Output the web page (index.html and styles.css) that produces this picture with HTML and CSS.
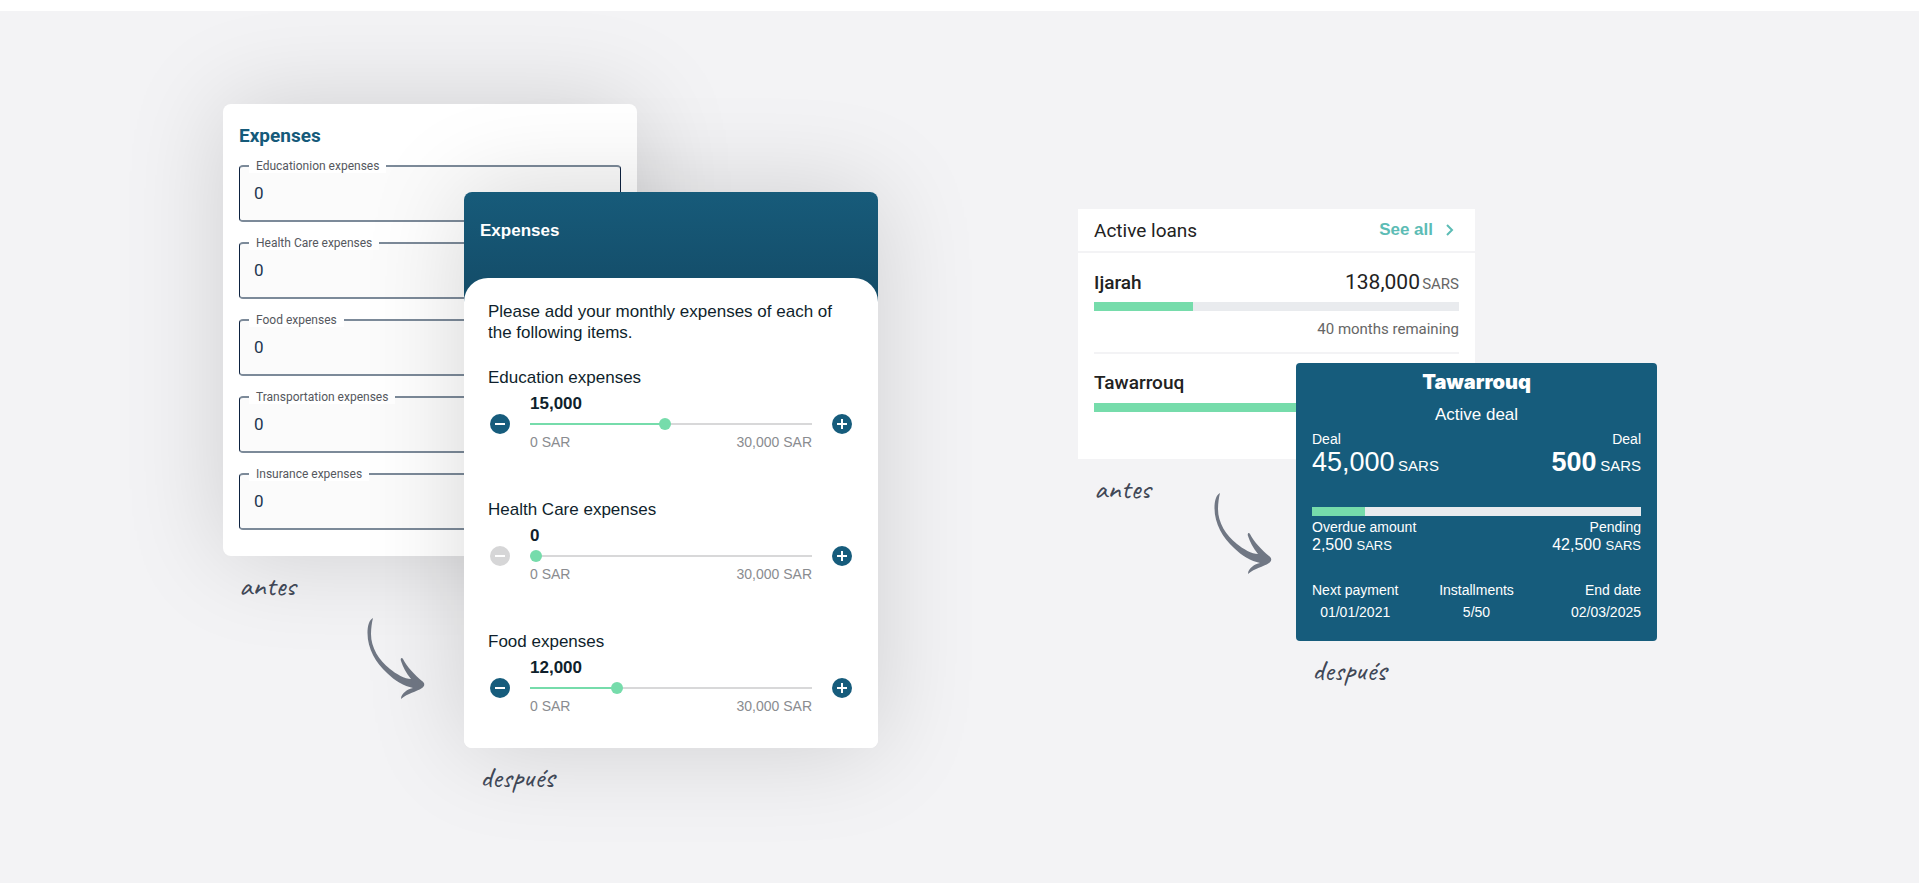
FILE: index.html
```html
<!DOCTYPE html>
<html lang="en">
<head>
    <meta charset="UTF-8">
    <title>Expenses and loans</title>
    <meta name="viewport" content="width=device-width, initial-scale=1.0">
    <link rel="stylesheet" href="styles.css">
</head>
<body>
    <main class="canvas">
        <section class="compare expenses">
            <div class="before">
                <form class="old-form">
                    <h2>Expenses</h2>
                    <div class="field">
                        <label for="education">Educationion expenses</label>
                        <input type="text" id="education" value="0">
                    </div>
                    <div class="field">
                        <label for="health">Health Care expenses</label>
                        <input type="text" id="health" value="0">
                    </div>
                    <div class="field">
                        <label for="food">Food expenses</label>
                        <input type="text" id="food" value="0">
                    </div>
                    <div class="field">
                        <label for="transport">Transportation expenses</label>
                        <input type="text" id="transport" value="0">
                    </div>
                    <div class="field">
                        <label for="insurance">Insurance expenses</label>
                        <input type="text" id="insurance" value="0">
                    </div>
                </form>
                <div class="note">
                    <p class="caption">antes</p>
                    <svg class="arrow" viewBox="0 0 58 83" aria-hidden="true">
                        <path d="M6 1C2 3 .5 9 .5 16C.5 32 9 46 20 56C28 64 37 69 46 71C41 72 34 76 34 82C41 76 49 75 55 71C58 69 58 66 55 64C48 58 40 50 36 42C35 40 33 41 34 44C36 50 39 56 44 62C38 62 29 57 23 52C12 43 4 31 4 17C4 11 5 5 6 1Z"/>
                    </svg>
                </div>
            </div>
            <div class="after">
                <form class="new-form">
                    <header>
                        <h2>Expenses</h2>
                    </header>
                    <div class="form-body">
                        <p class="intro">Please add your monthly expenses of each of the following items.</p>
                        <div class="item">
                            <label for="range1">Education expenses</label>
                            <div class="stepper">
                                <output class="value" for="range1">15,000</output>
                                <button type="button" class="step minus" aria-label="Less">
                                    <svg viewBox="0 0 20 20"><path d="M5 10H15"/></svg>
                                </button>
                                <input type="range" id="range1" min="0" max="30000" value="14340" style="--fill: 48%">
                                <button type="button" class="step plus" aria-label="More">
                                    <svg viewBox="0 0 20 20"><path d="M5 10H15M10 5V15"/></svg>
                                </button>
                                <div class="limits"><span>0 SAR</span><span>30,000 SAR</span></div>
                            </div>
                        </div>
                        <div class="item">
                            <label for="range2">Health Care expenses</label>
                            <div class="stepper">
                                <output class="value" for="range2">0</output>
                                <button type="button" class="step minus" aria-label="Less" disabled>
                                    <svg viewBox="0 0 20 20"><path d="M5 10H15"/></svg>
                                </button>
                                <input type="range" id="range2" min="0" max="30000" value="0" style="--fill: 0%">
                                <button type="button" class="step plus" aria-label="More">
                                    <svg viewBox="0 0 20 20"><path d="M5 10H15M10 5V15"/></svg>
                                </button>
                                <div class="limits"><span>0 SAR</span><span>30,000 SAR</span></div>
                            </div>
                        </div>
                        <div class="item">
                            <label for="range3">Food expenses</label>
                            <div class="stepper">
                                <output class="value" for="range3">12,000</output>
                                <button type="button" class="step minus" aria-label="Less">
                                    <svg viewBox="0 0 20 20"><path d="M5 10H15"/></svg>
                                </button>
                                <input type="range" id="range3" min="0" max="30000" value="9000" style="--fill: 31%">
                                <button type="button" class="step plus" aria-label="More">
                                    <svg viewBox="0 0 20 20"><path d="M5 10H15M10 5V15"/></svg>
                                </button>
                                <div class="limits"><span>0 SAR</span><span>30,000 SAR</span></div>
                            </div>
                        </div>
                    </div>
                </form>
                <p class="caption">después</p>
            </div>
        </section>

        <section class="compare loans">
            <div class="before">
                <div class="loan-list">
                    <header>
                        <h2>Active loans</h2>
                        <a href="#">See all
                            <svg viewBox="0 0 8 12" aria-hidden="true"><path d="M1 1L6 6L1 11"/></svg>
                        </a>
                    </header>
                    <div class="loan">
                        <div class="loan-row">
                            <h3>Ijarah</h3>
                            <p class="total">138,000 <small>SARS</small></p>
                        </div>
                        <div class="bar"><div style="width: 27%"></div></div>
                        <p class="remaining">40 months remaining</p>
                    </div>
                    <div class="loan">
                        <div class="loan-row">
                            <h3>Tawarrouq</h3>
                        </div>
                        <div class="bar"><div style="width: 100%"></div></div>
                    </div>
                </div>
                <div class="note">
                    <p class="caption">antes</p>
                    <svg class="arrow" viewBox="0 0 58 83" aria-hidden="true">
                        <path d="M6 1C2 3 .5 9 .5 16C.5 32 9 46 20 56C28 64 37 69 46 71C41 72 34 76 34 82C41 76 49 75 55 71C58 69 58 66 55 64C48 58 40 50 36 42C35 40 33 41 34 44C36 50 39 56 44 62C38 62 29 57 23 52C12 43 4 31 4 17C4 11 5 5 6 1Z"/>
                    </svg>
                </div>
            </div>
            <div class="after">
                <article class="deal">
                    <h2>Tawarrouq</h2>
                    <p class="status">Active deal</p>
                    <div class="deal-row">
                        <div>
                            <p class="label">Deal</p>
                            <p class="amount">45,000 <small>SARS</small></p>
                        </div>
                        <div class="right">
                            <p class="label">Deal</p>
                            <p class="amount"><b>500</b> <small>SARS</small></p>
                        </div>
                    </div>
                    <div class="bar"><div style="width: 16%"></div></div>
                    <div class="deal-row">
                        <div>
                            <p class="label">Overdue amount</p>
                            <p class="sum">2,500 <small>SARS</small></p>
                        </div>
                        <div class="right">
                            <p class="label">Pending</p>
                            <p class="sum">42,500 <small>SARS</small></p>
                        </div>
                    </div>
                    <div class="dates">
                        <div>
                            <p class="label">Next payment</p>
                            <p>01/01/2021</p>
                        </div>
                        <div>
                            <p class="label">Installments</p>
                            <p>5/50</p>
                        </div>
                        <div class="right">
                            <p class="label">End date</p>
                            <p>02/03/2025</p>
                        </div>
                    </div>
                </article>
                <p class="caption">después</p>
            </div>
        </section>
    </main>
</body>
</html>
```

FILE: styles.css
```css
* { box-sizing: border-box; }
body, h2, h3, p { margin: 0; }
body {
    padding-top: 11px; background: #fff; color: #0f1f2c;
    font-family: "Liberation Sans", Arial, sans-serif;
}
.canvas {
    display: flex; align-items: flex-start; gap: 200px;
    min-height: calc(100vh - 11px);
    padding: 93px 262px 40px 223px;
    background: #f3f3f5;
}

/* before and after cards share one grid row and overlap in the middle column */
.compare { display: grid; align-items: start; }
.expenses { flex: 655 1 0; grid-template-columns: 241fr 173fr 241fr; }
.loans { flex: 579 1 0; grid-template-columns: 218fr 179fr 182fr; margin-top: 105px; }
.before { grid-column: 1 / 3; grid-row: 1; }
.after { grid-column: 2 / 4; grid-row: 1; z-index: 1; }
.expenses .after { margin-top: 88px; }
.loans .after { margin-top: 154px; }

.note { display: grid; grid-template-columns: 144px 1fr; }
.loans .note { grid-template-columns: 136px 1fr; }
.caption {
    margin: 13px 0 0 16px; font: 30px/32px Caveat, cursive; color: #404756;
}
.arrow { width: 58px; height: 83px; margin-top: 61px; fill: #707784; }
.loans .arrow { margin-top: 33px; }

/* old expenses form */
.old-form {
    padding: 20px 16px 26px; background: #fff; border-radius: 8px;
    box-shadow: 0 0 100px rgba(0, 0, 0, 0.15);
}
.old-form h2 { font: bold 19px/24px Roboto, sans-serif; color: #155a7a; margin-bottom: 17px; }
.field { position: relative; }
.field + .field { margin-top: 20px; }
.field label {
    position: absolute; top: -6px; left: 10px; padding: 0 7px; background: #fff;
    font: 12px/14px Roboto, sans-serif; color: #55585e;
}
.field input {
    display: block; width: 100%; height: 57px; padding: 0 14px 2px;
    border: 1px solid #0d2240; border-width: 2px 1px; border-top-color: #7c8a99; border-bottom-color: #7c8a99;
    border-radius: 4px; background: #fbfbfb;
    font: 17px Roboto, sans-serif; color: #223650;
}

/* new expenses form */
.new-form {
    border-radius: 8px; background: #fff; overflow: hidden;
    box-shadow: 0 0 100px rgba(0, 0, 0, 0.15);
}
.new-form header {
    padding: 28px 16px 60px; background: linear-gradient(#175b7a, #134b67);
}
.new-form h2 { font-size: 17px; line-height: 22px; color: #fff; }
.form-body {
    margin-top: -24px; padding: 23px 24px 32px; background: #fff;
    border-radius: 24px 24px 0 0;
}
.intro { font-size: 17px; line-height: 21px; margin-bottom: 25px; }
.item + .item { margin-top: 48px; }
.item label { display: block; font-size: 17px; line-height: 20px; }
.stepper {
    display: grid; grid-template-columns: 20px 1fr 20px; grid-template-rows: 20px 20px 18px;
    column-gap: 20px; margin: 6px 2px 0;
}
.value { grid-area: 1 / 2; font-size: 17px; font-weight: bold; line-height: 20px; }
.step {
    width: 20px; height: 20px; padding: 0; border: none; border-radius: 50%;
    background: #165c7c; cursor: pointer;
}
.step:disabled { background: #d6d6d7; cursor: default; }
.step svg { display: block; stroke: #fff; stroke-width: 2; fill: none; }
.minus { grid-area: 2 / 1; }
.plus { grid-area: 2 / 3; }
.stepper input {
    grid-area: 2 / 2; appearance: none; width: 100%; height: 20px; margin: 0; background: none;
}
.stepper input::-webkit-slider-runnable-track {
    height: 2px; background: linear-gradient(to right, #76dcab var(--fill), #d8d8d9 var(--fill));
}
.stepper input::-webkit-slider-thumb {
    appearance: none; width: 12px; height: 12px; margin-top: -5px;
    border-radius: 50%; background: #76dcab;
}
.limits {
    grid-area: 3 / 2; display: flex; justify-content: space-between;
    font-size: 14px; line-height: 16px; color: #8a8c90;
}

/* loans list */
.bar { height: 9px; background: #e9ebee; }
.bar div { height: 100%; background: #76dcab; }
.loan-list { padding-bottom: 47px; background: #fff; color: #222; font-family: Roboto, sans-serif; }
.loan-list header {
    display: flex; justify-content: space-between; align-items: center;
    height: 44px; padding: 0 21px 0 16px; border-bottom: 2px solid #f3f3f5;
}
.loan-list h2 { font-size: 19px; font-weight: normal; }
.loan-list a {
    display: flex; align-items: center; gap: 13px; color: #5cbcb5; text-decoration: none;
    font: bold 17px "Liberation Sans", Arial, sans-serif;
}
.loan-list a svg { width: 8px; height: 12px; fill: none; stroke: #5cbcb5; stroke-width: 2; }
.loan { margin: 0 16px; }
.loan + .loan { border-top: 2px solid #f3f3f5; }
.loan-row {
    display: flex; justify-content: space-between; align-items: baseline;
    height: 48px; padding-top: 17px; line-height: 24px;
}
.loan h3 { font-size: 19px; font-weight: 500; }
.total { font-size: 21px; }
.total small { font-size: 15px; margin-left: -3px; color: #666; }
.loan .bar { margin-top: 1px; }
.remaining { margin: 8px 0 13px; font-size: 15px; line-height: 20px; text-align: right; color: #666; }

/* deal card */
.deal { padding: 7px 16px 20px; border-radius: 4px; background: #165c7c; color: #fff; }
.deal h2 { font: 900 20px/24px Inter, sans-serif; text-align: center; }
.status { margin: 11px 0 5px; font-size: 17px; line-height: 20px; text-align: center; }
.deal-row { display: flex; justify-content: space-between; }
.label { font-size: 14px; line-height: 18px; }
.amount { font-size: 27px; line-height: 28px; }
.amount small { font-size: 15px; margin-left: -4px; }
.deal .bar { margin: 27px 0 2px; }
.sum { font-size: 16px; line-height: 18px; }
.sum small { font-size: 13px; }
.dates {
    display: grid; grid-template-columns: 1fr auto 1fr; justify-items: start;
    margin-top: 26px; font-size: 14px; line-height: 18px; text-align: center;
}
.dates .label { margin-bottom: 4px; }
.right { justify-self: end; text-align: right; }
```
